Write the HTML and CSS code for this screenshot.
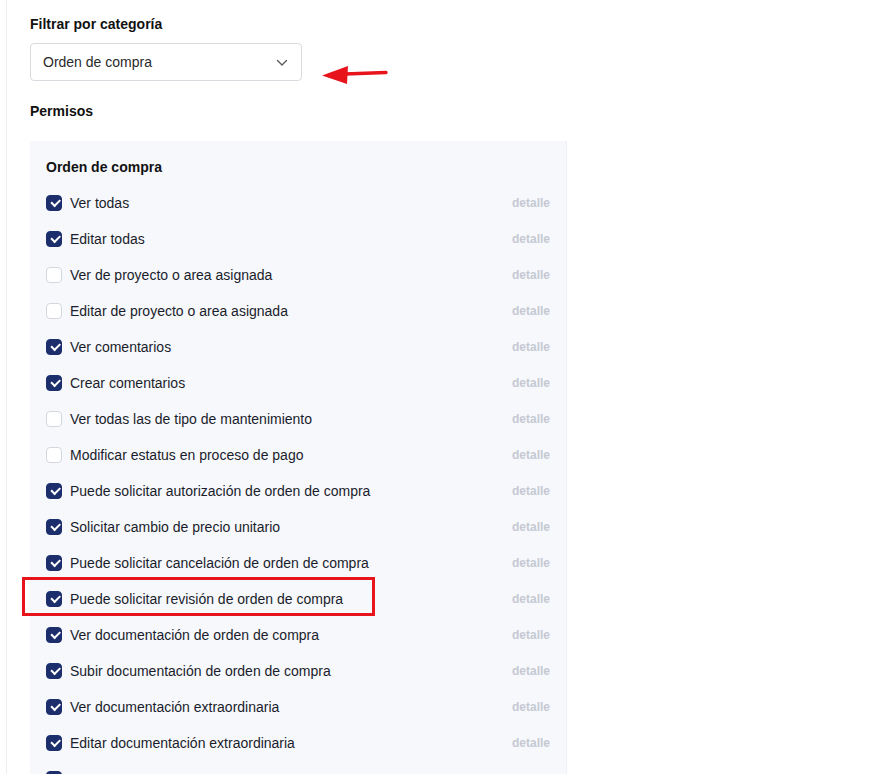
FILE: index.html
```html
<!DOCTYPE html>
<html lang="es">
<head>
<meta charset="utf-8">
<link rel="stylesheet" href="styles.css">
</head>
<body>
<div class="page">
  <div class="content">
    <div class="field-label">Filtrar por categoría</div>
    <div class="filter-row">
      <div class="select">
        <span>Orden de compra</span>
        <svg class="chev" width="12" height="8" viewBox="0 0 12 8"><path d="M1.5 1.5 L6 6 L10.5 1.5" fill="none" stroke="#555" stroke-width="1.3" stroke-linecap="round" stroke-linejoin="round"/></svg>
      </div>
      <svg class="arrow" width="70" height="24" viewBox="0 0 70 24"><path d="M24 11 L65 9.5" stroke="#e8141b" stroke-width="3.4" stroke-linecap="round"/><polygon points="1,12.5 27,3 26,21" fill="#e8141b"/></svg>
    </div>
    <div class="field-label perm">Permisos</div>
    <div class="panel">
      <div class="panel-title">Orden de compra</div>
      <ul class="list">
        <li class="row"><span class="cb on"></span><span class="lbl">Ver todas</span><span class="det">detalle</span></li>
        <li class="row"><span class="cb on"></span><span class="lbl">Editar todas</span><span class="det">detalle</span></li>
        <li class="row"><span class="cb"></span><span class="lbl">Ver de proyecto o area asignada</span><span class="det">detalle</span></li>
        <li class="row"><span class="cb"></span><span class="lbl">Editar de proyecto o area asignada</span><span class="det">detalle</span></li>
        <li class="row"><span class="cb on"></span><span class="lbl">Ver comentarios</span><span class="det">detalle</span></li>
        <li class="row"><span class="cb on"></span><span class="lbl">Crear comentarios</span><span class="det">detalle</span></li>
        <li class="row"><span class="cb"></span><span class="lbl">Ver todas las de tipo de mantenimiento</span><span class="det">detalle</span></li>
        <li class="row"><span class="cb"></span><span class="lbl">Modificar estatus en proceso de pago</span><span class="det">detalle</span></li>
        <li class="row"><span class="cb on"></span><span class="lbl">Puede solicitar autorización de orden de compra</span><span class="det">detalle</span></li>
        <li class="row"><span class="cb on"></span><span class="lbl">Solicitar cambio de precio unitario</span><span class="det">detalle</span></li>
        <li class="row"><span class="cb on"></span><span class="lbl">Puede solicitar cancelación de orden de compra</span><span class="det">detalle</span></li>
        <li class="row marked"><span class="cb on"></span><span class="lbl">Puede solicitar revisión de orden de compra</span><span class="det">detalle</span><span class="highlight"></span></li>
        <li class="row"><span class="cb on"></span><span class="lbl">Ver documentación de orden de compra</span><span class="det">detalle</span></li>
        <li class="row"><span class="cb on"></span><span class="lbl">Subir documentación de orden de compra</span><span class="det">detalle</span></li>
        <li class="row"><span class="cb on"></span><span class="lbl">Ver documentación extraordinaria</span><span class="det">detalle</span></li>
        <li class="row"><span class="cb on"></span><span class="lbl">Editar documentación extraordinaria</span><span class="det">detalle</span></li>
        <li class="row"><span class="cb on"></span><span class="lbl"></span></li>
      </ul>
    </div>
  </div>
</div>
</body>
</html>
```

FILE: styles.css
```css
* { box-sizing: border-box; }
html, body { margin: 0; padding: 0; background: #fff; }
body {
  font-family: "Liberation Sans", Arial, Helvetica, sans-serif;
  color: #1b1f2a;
  width: 874px;
  height: 774px;
  overflow: hidden;
}
.page {
  margin-left: 6px;
  border-left: 1px solid #eceef3;
  min-height: 774px;
  padding-left: 23px;
  padding-top: 14px;
}
.content { width: 540px; }
.field-label {
  font-size: 14px;
  font-weight: bold;
  line-height: 20px;
  color: #111;
}
.filter-row {
  display: flex;
  align-items: flex-start;
  margin-top: 9px;
  position: relative;
}
.select {
  width: 272px;
  height: 38px;
  border: 1px solid #d9dbe0;
  border-radius: 4px;
  display: flex;
  align-items: center;
  justify-content: space-between;
  padding: 0 13px 0 12px;
  font-size: 14px;
  color: #2a2a2a;
  background: #fff;
}
.chev { margin-top: 1px; }
.arrow {
  position: absolute;
  left: 291px;
  top: 20px;
}
.perm { margin-top: 20px; }
.panel {
  margin-top: 20px;
  width: 537px;
  background: #f7f8fc;
  border-right: 1px solid #f0f1f5;
  padding: 16px 16px 0 16px;
}
.panel-title {
  font-size: 14px;
  font-weight: bold;
  line-height: 20px;
  color: #111;
  margin-bottom: 8px;
}
.list { list-style: none; margin: 0; padding: 0; }
.row {
  position: relative;
  height: 36px;
  display: flex;
  align-items: center;
  font-size: 14px;
}
.cb {
  width: 16px;
  height: 16px;
  border-radius: 4px;
  border: 1px solid #d4d7de;
  background: #fff;
  flex: none;
  position: relative;
}
.cb.on {
  background: #1d2e6c;
  border-color: #1d2e6c;
}
.cb.on::after {
  content: "";
  position: absolute;
  left: 3.5px;
  top: 3px;
  width: 7px;
  height: 3.5px;
  border-left: 2px solid #fff;
  border-bottom: 2px solid #fff;
  transform: rotate(-45deg);
}
.lbl {
  margin-left: 8px;
  color: #1a1d2b;
  flex: 1;
}
.det {
  font-size: 12px;
  font-weight: bold;
  color: #c5c9d3;
}
.highlight {
  position: absolute;
  left: -24px;
  top: -4px;
  width: 353px;
  height: 39px;
  border: 3px solid #e8141b;
}
```
